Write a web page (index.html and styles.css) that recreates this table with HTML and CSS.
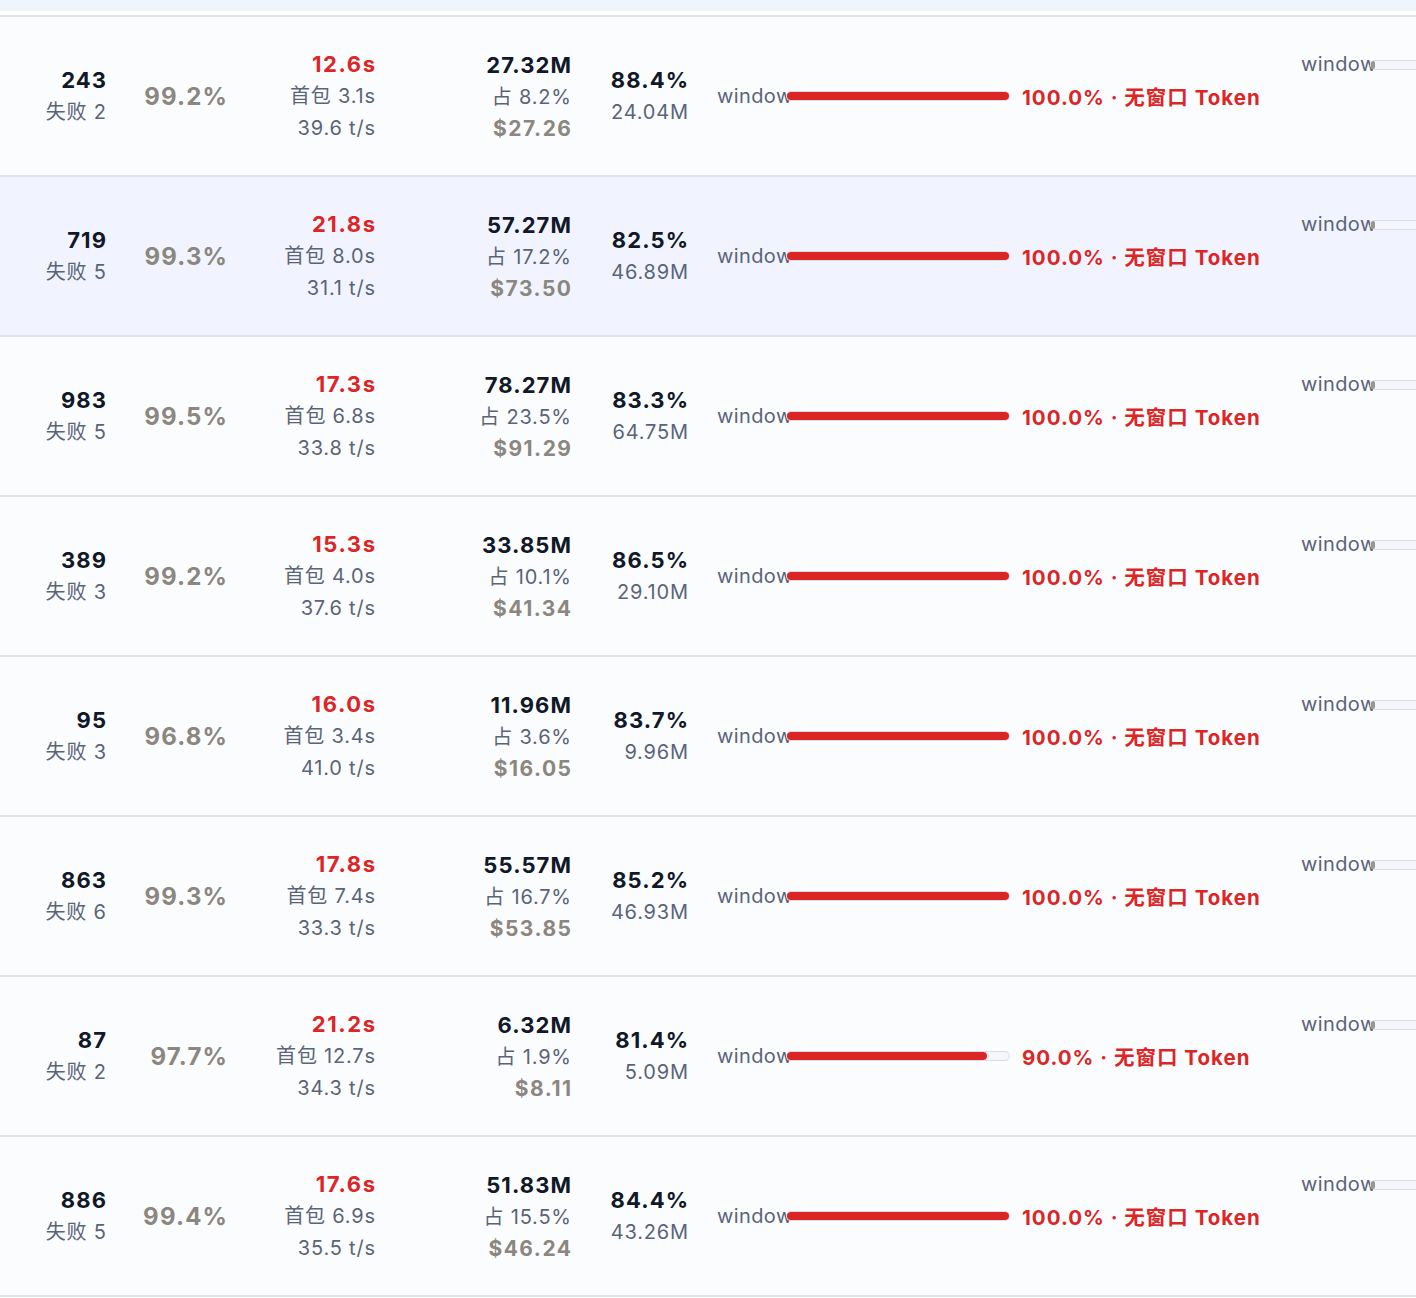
FILE: index.html
```html
<!DOCTYPE html>
<html lang="zh-CN">
<head>
<meta charset="utf-8">
<title>Stats</title>
<link rel="stylesheet" href="styles.css">
</head>
<body>
<div class="topband"></div>
<div class="table">
  <div class="row">
    <div class="c c1"><div class="pri">243</div><div class="sec">失败 2</div></div>
    <div class="c c2"><div class="rate">99.2%</div></div>
    <div class="c c3"><div class="pri red">12.6s</div><div class="sec">首包 3.1s</div><div class="sec">39.6 t/s</div></div>
    <div class="c c4"><div class="pri">27.32M</div><div class="sec">占 8.2%</div><div class="cost">$27.26</div></div>
    <div class="c c5"><div class="pri">88.4%</div><div class="sec">24.04M</div></div>
    <div class="c c6"><span class="lbl">window</span><span class="bar"><span class="fill" style="width:100%"></span></span><span class="pct">100.0% · 无窗口 Token</span></div>
    <div class="c c7"><span class="lbl2">window</span><span class="bar2"><span class="fill2"></span></span></div>
  </div>
  <div class="row hover">
    <div class="c c1"><div class="pri">719</div><div class="sec">失败 5</div></div>
    <div class="c c2"><div class="rate">99.3%</div></div>
    <div class="c c3"><div class="pri red">21.8s</div><div class="sec">首包 8.0s</div><div class="sec">31.1 t/s</div></div>
    <div class="c c4"><div class="pri">57.27M</div><div class="sec">占 17.2%</div><div class="cost">$73.50</div></div>
    <div class="c c5"><div class="pri">82.5%</div><div class="sec">46.89M</div></div>
    <div class="c c6"><span class="lbl">window</span><span class="bar"><span class="fill" style="width:100%"></span></span><span class="pct">100.0% · 无窗口 Token</span></div>
    <div class="c c7"><span class="lbl2">window</span><span class="bar2"><span class="fill2"></span></span></div>
  </div>
  <div class="row">
    <div class="c c1"><div class="pri">983</div><div class="sec">失败 5</div></div>
    <div class="c c2"><div class="rate">99.5%</div></div>
    <div class="c c3"><div class="pri red">17.3s</div><div class="sec">首包 6.8s</div><div class="sec">33.8 t/s</div></div>
    <div class="c c4"><div class="pri">78.27M</div><div class="sec">占 23.5%</div><div class="cost">$91.29</div></div>
    <div class="c c5"><div class="pri">83.3%</div><div class="sec">64.75M</div></div>
    <div class="c c6"><span class="lbl">window</span><span class="bar"><span class="fill" style="width:100%"></span></span><span class="pct">100.0% · 无窗口 Token</span></div>
    <div class="c c7"><span class="lbl2">window</span><span class="bar2"><span class="fill2"></span></span></div>
  </div>
  <div class="row">
    <div class="c c1"><div class="pri">389</div><div class="sec">失败 3</div></div>
    <div class="c c2"><div class="rate">99.2%</div></div>
    <div class="c c3"><div class="pri red">15.3s</div><div class="sec">首包 4.0s</div><div class="sec">37.6 t/s</div></div>
    <div class="c c4"><div class="pri">33.85M</div><div class="sec">占 10.1%</div><div class="cost">$41.34</div></div>
    <div class="c c5"><div class="pri">86.5%</div><div class="sec">29.10M</div></div>
    <div class="c c6"><span class="lbl">window</span><span class="bar"><span class="fill" style="width:100%"></span></span><span class="pct">100.0% · 无窗口 Token</span></div>
    <div class="c c7"><span class="lbl2">window</span><span class="bar2"><span class="fill2"></span></span></div>
  </div>
  <div class="row">
    <div class="c c1"><div class="pri">95</div><div class="sec">失败 3</div></div>
    <div class="c c2"><div class="rate">96.8%</div></div>
    <div class="c c3"><div class="pri red">16.0s</div><div class="sec">首包 3.4s</div><div class="sec">41.0 t/s</div></div>
    <div class="c c4"><div class="pri">11.96M</div><div class="sec">占 3.6%</div><div class="cost">$16.05</div></div>
    <div class="c c5"><div class="pri">83.7%</div><div class="sec">9.96M</div></div>
    <div class="c c6"><span class="lbl">window</span><span class="bar"><span class="fill" style="width:100%"></span></span><span class="pct">100.0% · 无窗口 Token</span></div>
    <div class="c c7"><span class="lbl2">window</span><span class="bar2"><span class="fill2"></span></span></div>
  </div>
  <div class="row">
    <div class="c c1"><div class="pri">863</div><div class="sec">失败 6</div></div>
    <div class="c c2"><div class="rate">99.3%</div></div>
    <div class="c c3"><div class="pri red">17.8s</div><div class="sec">首包 7.4s</div><div class="sec">33.3 t/s</div></div>
    <div class="c c4"><div class="pri">55.57M</div><div class="sec">占 16.7%</div><div class="cost">$53.85</div></div>
    <div class="c c5"><div class="pri">85.2%</div><div class="sec">46.93M</div></div>
    <div class="c c6"><span class="lbl">window</span><span class="bar"><span class="fill" style="width:100%"></span></span><span class="pct">100.0% · 无窗口 Token</span></div>
    <div class="c c7"><span class="lbl2">window</span><span class="bar2"><span class="fill2"></span></span></div>
  </div>
  <div class="row">
    <div class="c c1"><div class="pri">87</div><div class="sec">失败 2</div></div>
    <div class="c c2"><div class="rate">97.7%</div></div>
    <div class="c c3"><div class="pri red">21.2s</div><div class="sec">首包 12.7s</div><div class="sec">34.3 t/s</div></div>
    <div class="c c4"><div class="pri">6.32M</div><div class="sec">占 1.9%</div><div class="cost">$8.11</div></div>
    <div class="c c5"><div class="pri">81.4%</div><div class="sec">5.09M</div></div>
    <div class="c c6"><span class="lbl">window</span><span class="bar"><span class="fill" style="width:90%"></span></span><span class="pct">90.0% · 无窗口 Token</span></div>
    <div class="c c7"><span class="lbl2">window</span><span class="bar2"><span class="fill2"></span></span></div>
  </div>
  <div class="row">
    <div class="c c1"><div class="pri">886</div><div class="sec">失败 5</div></div>
    <div class="c c2"><div class="rate">99.4%</div></div>
    <div class="c c3"><div class="pri red">17.6s</div><div class="sec">首包 6.9s</div><div class="sec">35.5 t/s</div></div>
    <div class="c c4"><div class="pri">51.83M</div><div class="sec">占 15.5%</div><div class="cost">$46.24</div></div>
    <div class="c c5"><div class="pri">84.4%</div><div class="sec">43.26M</div></div>
    <div class="c c6"><span class="lbl">window</span><span class="bar"><span class="fill" style="width:100%"></span></span><span class="pct">100.0% · 无窗口 Token</span></div>
    <div class="c c7"><span class="lbl2">window</span><span class="bar2"><span class="fill2"></span></span></div>
  </div>
</div>
</body>
</html>
```

FILE: styles.css
```css
html, body {
  margin: 0;
  padding: 0;
  background: #ffffff;
  overflow: hidden;
}
body {
  width: 1416px;
  font-family: "Inter", "Noto Sans CJK SC", sans-serif;
  color: #5a6478;
}
.topband {
  height: 11px;
  background: #eff4fd;
  margin-bottom: 4px;
}
.table {
  border-top: 2px solid #dfe4ec;
}
.row {
  display: grid;
  grid-template-columns: 106px 121px 148px 196px 117px 613px 1fr;
  height: 158px;
  border-bottom: 2px solid #dfe4ec;
  background: #fbfcfe;
  overflow: hidden;
}
.row.hover {
  background: #f1f4fe;
}
.c {
  display: flex;
  flex-direction: column;
  justify-content: center;
  align-items: flex-end;
  min-width: 0;
}
.pri {
  font-size: 22px;
  font-weight: 700;
  color: #111827;
  line-height: 32px;
  letter-spacing: 1.1px;
  margin-right: -1.1px;
}
.pri.red {
  color: #dc2626;
  letter-spacing: 1.6px;
  margin-right: -1.6px;
}
.sec {
  font-size: 20px;
  line-height: 32px;
  color: #5a6478;
  letter-spacing: 0.8px;
  margin-right: -0.8px;
}
.cost {
  font-size: 21px;
  font-weight: 700;
  line-height: 31px;
  color: #8b867e;
  letter-spacing: 1.5px;
  margin-right: -1.5px;
}
.rate {
  font-size: 24px;
  font-weight: 700;
  color: #8b867e;
  letter-spacing: 1.2px;
  margin-right: -1.2px;
}
.c6 {
  flex-direction: row;
  align-items: center;
  justify-content: flex-start;
  padding-left: 29px;
}
.lbl {
  width: 73px;
  flex: none;
  overflow: hidden;
  white-space: nowrap;
  font-size: 20px;
  color: #5a6478;
  letter-spacing: 0.4px;
}
.bar {
  flex: none;
  width: 222px;
  height: 8px;
  margin-left: -4px;
  border: 1px solid #d8dee9;
  border-radius: 6px;
  background: #f4f6fc;
  display: flex;
  position: relative;
}
.fill {
  height: 100%;
  background: #dc2626;
  border-radius: 5px;
}
.pct {
  margin-left: 12px;
  font-size: 20.5px;
  font-weight: 700;
  color: #dc2626;
  white-space: nowrap;
  letter-spacing: 1px;
}
.c7 {
  flex-direction: row;
  align-items: center;
  justify-content: flex-start;
  align-self: start;
  padding-top: 32px;
}
.lbl2 {
  width: 73px;
  flex: none;
  overflow: hidden;
  white-space: nowrap;
  font-size: 20px;
  line-height: 31px;
  color: #5a6478;
  letter-spacing: 0.4px;
}
.bar2 {
  flex: none;
  width: 200px;
  height: 8px;
  margin-left: -4px;
  border: 1px solid #d8dee9;
  border-radius: 6px;
  background: #f4f6fc;
  display: flex;
  position: relative;
}
.fill2 {
  width: 4px;
  height: 100%;
  background: #9b958b;
  border-radius: 4px;
}
```
